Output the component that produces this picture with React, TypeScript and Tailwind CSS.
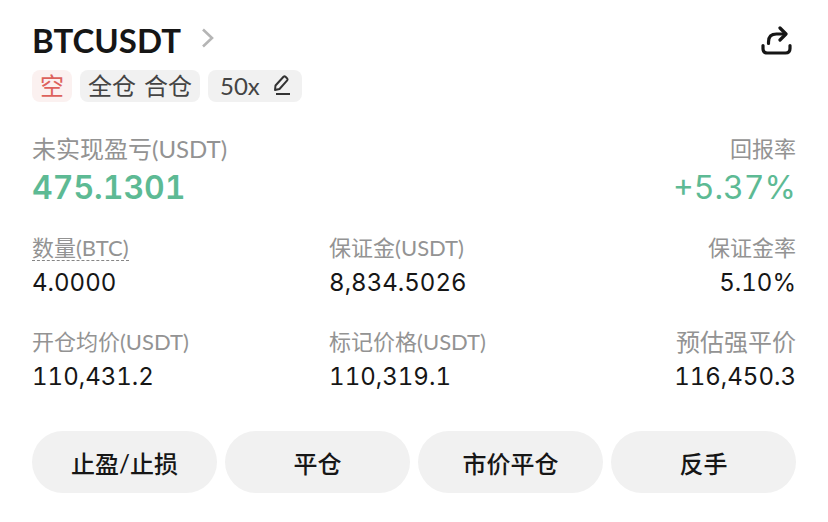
import type { ReactNode } from "react";

type StatProps = {
  label: string;
  value: string;
  align?: "left" | "right";
  large?: boolean;
  dashed?: boolean;
};

function Stat({ label, value, align = "left", large = false, dashed = false }: StatProps) {
  return (
    <div className={`flex flex-col gap-[3px] whitespace-nowrap ${align === "right" ? "items-end" : "items-start"}`}>
      <dt className={`leading-8 text-[#939393] ${large ? "text-2xl" : "text-[22px]"}`}>
        {dashed ? (
          <span className="inline-block border-b border-dashed border-[#858585] leading-6">{label}</span>
        ) : (
          label
        )}
      </dt>
      <dd className="font-['Inter','Noto_Sans_CJK_SC',sans-serif] text-2xl leading-8 tabular-nums text-[#161616]">
        {value}
      </dd>
    </div>
  );
}

function Chip({ children, tone = "gray" }: { children: ReactNode; tone?: "gray" | "red" }) {
  return (
    <span
      className={`flex h-8 items-center gap-2 whitespace-nowrap rounded-lg px-2 text-2xl ${
        tone === "red" ? "bg-[#fbf1f0] text-[#dd625c]" : "bg-[#f1f1f1] text-[#444444]"
      }`}
    >
      {children}
    </span>
  );
}

const actions = ["止盈/止损", "平仓", "市价平仓", "反手"];

export default function App() {
  return (
    <main className="min-h-screen bg-white px-8 pt-5 pb-7 font-['Lato','Noto_Sans_CJK_SC',sans-serif] text-[#161616]">
      <header className="flex h-10 items-center justify-between">
        <button type="button" className="flex items-center gap-5">
          <h1 className="text-[33px] font-bold leading-10">BTCUSDT</h1>
          <svg width="14" height="24" viewBox="0 0 14 24" fill="none" stroke="#b5b5b5" strokeWidth="2.6" aria-hidden="true">
            <path d="M2 1.500 L11 10 L2 18.500" />
          </svg>
        </button>
        <button type="button" aria-label="分享" className="pt-1 pr-1">
          <svg width="32" height="32" viewBox="0 0 32 32" fill="none" stroke="#161616" strokeWidth="3.2" strokeLinecap="round" strokeLinejoin="round" aria-hidden="true">
            <path d="M3 19.5 V22.5 Q3 27 7.5 27 H25.500 Q30 27 30 22.500 V19.5" />
            <path d="M8.500 17.500 V16 Q8.500 8 16.500 8 H25" />
            <path d="M20 2 L26 8 L20 14" />
          </svg>
        </button>
      </header>

      <div className="mt-[10px] flex gap-2">
        <Chip tone="red">空</Chip>
        <Chip>
          <span>全仓</span>
          <span>合仓</span>
        </Chip>
        <button type="button" aria-label="调整杠杆 50x" className="rounded-lg">
          <Chip>
            <span className="px-1">50x</span>
            <svg width="22" height="24" viewBox="0 0 22 24" fill="none" stroke="#333333" strokeWidth="2" strokeLinejoin="round" aria-hidden="true">
              <path d="M3 16 L3.500 11.500 L11.500 2.800 Q12.500 2 13.500 2.800 L15.200 4.400 Q16 5.400 15.200 6.400 L7.500 15 Z" />
              <path d="M4 20 H18" />
            </svg>
          </Chip>
        </button>
      </div>

      <dl className="mt-[31px] flex justify-between whitespace-nowrap">
        <div>
          <dt className="text-2xl leading-8 text-[#939393]">未实现盈亏(USDT)</dt>
          <dd className="font-['Inter',sans-serif] text-[32px] font-semibold leading-[46px] tabular-nums text-[#5dba94]">
            475.1301
          </dd>
        </div>
        <div className="text-right">
          <dt className="text-[22px] leading-8 text-[#939393]">回报率</dt>
          <dd className="font-['Inter',sans-serif] text-[32px] leading-[46px] tabular-nums text-[#5dba94]">+5.37%</dd>
        </div>
      </dl>

      <dl className="mt-[21px] grid grid-cols-[7fr_7fr_4fr] gap-y-[27px]">
        <Stat label="数量(BTC)" value="4.0000" dashed />
        <Stat label="保证金(USDT)" value="8,834.5026" />
        <Stat label="保证金率" value="5.10%" align="right" />
        <Stat label="开仓均价(USDT)" value="110,431.2" />
        <Stat label="标记价格(USDT)" value="110,319.1" />
        <Stat label="预估强平价" value="116,450.3" align="right" large />
      </dl>

      <div className="mt-[38px] grid grid-cols-4 gap-2">
        {actions.map((action) => (
          <button key={action} type="button" className="h-[62px] rounded-full bg-[#f1f1f1] pt-1 text-2xl font-medium">
            {action}
          </button>
        ))}
      </div>
    </main>
  );
}
